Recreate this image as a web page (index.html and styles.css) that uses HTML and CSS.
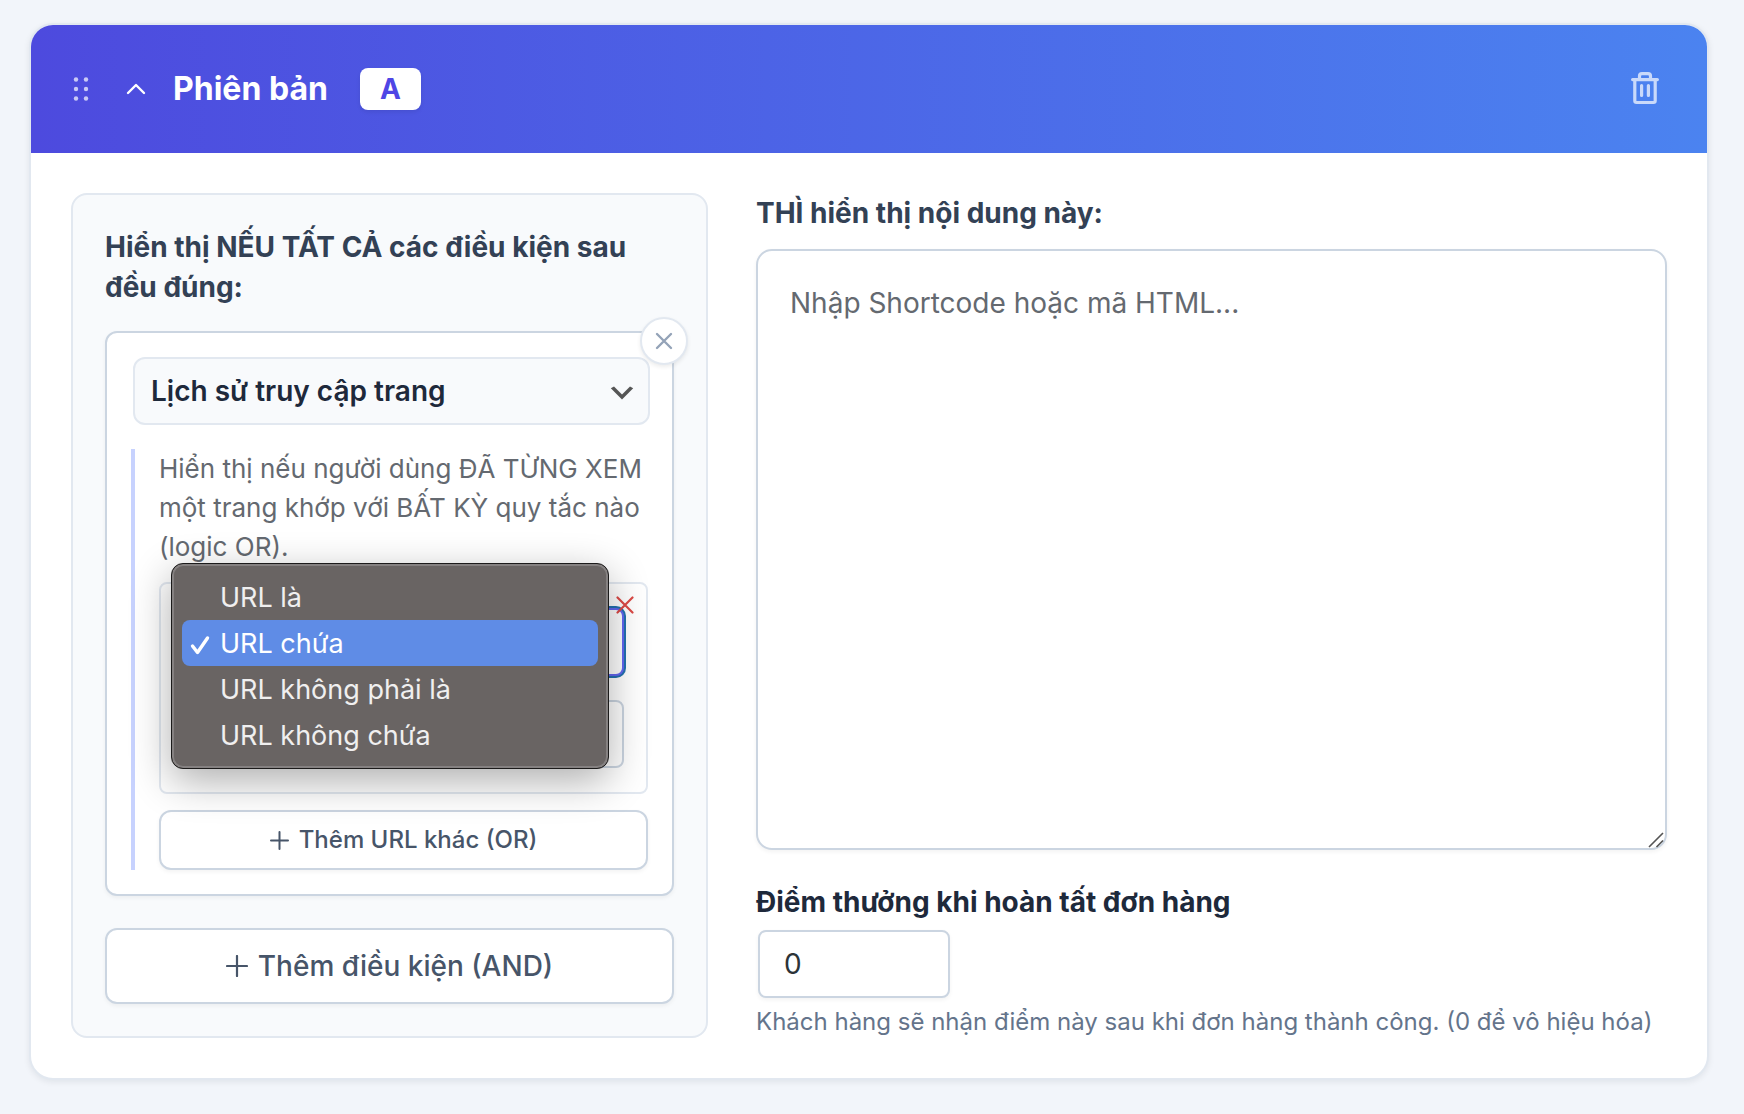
FILE: index.html
```html
<!DOCTYPE html>
<html lang="vi">
    <head>
        <meta charset="utf-8">
        <meta name="viewport" content="width=device-width, initial-scale=1">
        <title>Phiên bản A</title>
        <link rel="stylesheet" href="styles.css">
    </head>
    <body>
        <section class="variant">
            <header class="variant-header">
                <button type="button" class="icon-button drag" aria-label="Kéo để sắp xếp">
                    <svg width="16" height="24" viewBox="0 0 16 24" fill="currentColor">
                        <circle cx="3" cy="2.5" r="2.2"/><circle cx="13" cy="2.5" r="2.2"/>
                        <circle cx="3" cy="12" r="2.2"/><circle cx="13" cy="12" r="2.2"/>
                        <circle cx="3" cy="21.5" r="2.2"/><circle cx="13" cy="21.5" r="2.2"/>
                    </svg>
                </button>
                <button type="button" class="icon-button toggle" aria-label="Thu gọn">
                    <svg width="20" height="12" viewBox="0 0 20 12" fill="none" stroke="currentColor" stroke-width="2.4" stroke-linecap="round" stroke-linejoin="round">
                        <path d="M2 10l8-8 8 8"/>
                    </svg>
                </button>
                <h2 class="variant-title">Phiên bản</h2>
                <span class="variant-badge">A</span>
                <button type="button" class="icon-button trash" aria-label="Xóa phiên bản">
                    <svg width="28" height="34" viewBox="0 0 28 34" fill="none" stroke="currentColor" stroke-width="3.2" stroke-linecap="round" stroke-linejoin="round">
                        <path d="M1.6 7.6h24.8M3.8 7.6v21.2q0 1.7 1.7 1.7h17q1.7 0 1.7-1.7V7.6M8.5 7V4q0-2.4 2.5-2.4h6q2.5 0 2.5 2.4v3M10.6 13.5v10M17.4 13.5v10"/>
                    </svg>
                </button>
            </header>

            <div class="variant-body">
                <div class="rules">
                    <h3 class="heading rules-heading">Hiển thị NẾU TẤT CẢ các điều kiện sau đều đúng:</h3>

                    <div class="condition">
                        <button type="button" class="condition-remove" aria-label="Xóa điều kiện">
                            <svg width="18" height="18" viewBox="0 0 18 18" stroke="currentColor" stroke-width="2.4" stroke-linecap="round">
                                <path d="M2 2l14 14M16 2L2 16"/>
                            </svg>
                        </button>
                        <div class="select-wrap condition-type">
                            <select class="field field-type" aria-label="Loại điều kiện">
                                <option>Lịch sử truy cập trang</option>
                            </select>
                            <svg class="chevron" width="32" height="32" viewBox="0 0 20 20" fill="#555"><path d="M5 6l5 5 5-5 2 1-7 7-7-7 2-1z"/></svg>
                        </div>

                        <div class="history">
                            <p class="history-text">Hiển thị nếu người dùng ĐÃ TỪNG XEM một trang khớp với BẤT KỲ quy tắc nào (logic OR).</p>
                            <div class="url-rule">
                                <div class="select-wrap">
                                    <select class="field field-focus" aria-label="Kiểu so khớp URL">
                                        <option>URL là</option>
                                        <option selected>URL chứa</option>
                                        <option>URL không phải là</option>
                                        <option>URL không chứa</option>
                                    </select>
                                    <ul class="menu" role="listbox" aria-label="Kiểu so khớp URL">
                                        <li class="menu-item" role="option">URL là</li>
                                        <li class="menu-item selected" role="option" aria-selected="true">
                                            <svg class="check" width="20" height="20" viewBox="0 0 20 20" fill="none" stroke="currentColor" stroke-width="3.4" stroke-linecap="round" stroke-linejoin="round"><path d="M2.5 11l5 6.5L17.5 3"/></svg>
                                            URL chứa
                                        </li>
                                        <li class="menu-item" role="option">URL không phải là</li>
                                        <li class="menu-item" role="option">URL không chứa</li>
                                    </ul>
                                </div>
                                <input type="text" class="field" aria-label="URL">
                                <button type="button" class="url-remove" aria-label="Xóa URL">
                                    <svg width="18" height="18" viewBox="0 0 18 18" stroke="currentColor" stroke-width="2.2" stroke-linecap="round">
                                        <path d="M1.5 1.5l15 15M16.5 1.5l-15 15"/>
                                    </svg>
                                </button>
                            </div>
                            <button type="button" class="add-button add-or">
                                <svg width="19" height="19" viewBox="0 0 19 19" stroke="currentColor" stroke-width="2" stroke-linecap="round"><path d="M9.5 1v17M1 9.5h17"/></svg>
                                Thêm URL khác (OR)
                            </button>
                        </div>
                    </div>

                    <button type="button" class="add-button add-and">
                        <svg width="22" height="22" viewBox="0 0 22 22" stroke="currentColor" stroke-width="2.2" stroke-linecap="round"><path d="M11 1v20M1 11h20"/></svg>
                        Thêm điều kiện (AND)
                    </button>
                </div>

                <div class="content">
                    <label class="heading" for="content">THÌ hiển thị nội dung này:</label>
                    <div class="editor">
                        <textarea class="editor-input" id="content" placeholder="Nhập Shortcode hoặc mã HTML..."></textarea>
                        <svg class="grip" width="16" height="16" viewBox="0 0 16 16" stroke="#555" stroke-width="1.6"><path d="M1 15L15 1M8.5 15L15 8.5"/></svg>
                    </div>
                    <label class="points-label" for="points">Điểm thưởng khi hoàn tất đơn hàng</label>
                    <input type="number" class="field points" id="points" value="0">
                    <p class="hint">Khách hàng sẽ nhận điểm này sau khi đơn hàng thành công. (0 để vô hiệu hóa)</p>
                </div>
            </div>
        </section>
    </body>
</html>
```

FILE: styles.css
```css
* {
    box-sizing: border-box;
}
body {
    margin: 0;
    padding: 23px 35px 34px 29px;
    background-color: #f2f5fa;
    font-family: Inter, "Noto Sans", sans-serif;
    font-size: 28px;
    line-height: 40px;
    color: #1e293b;
}
h2, h3, p, ul {
    margin: 0;
    padding: 0;
}
button, input, select, textarea {
    font: inherit;
    color: inherit;
}
button {
    cursor: pointer;
}
svg {
    display: block;
}

/* card */
.variant {
    border: 2px solid #e2e8f0;
    border-radius: 24px;
    background-color: white;
    box-shadow: 0 2px 6px rgba(15, 23, 42, 0.08);
}
.variant-header {
    display: flex;
    align-items: center;
    height: 128px;
    padding: 0 40px;
    border-radius: 22px 22px 0 0;
    background: linear-gradient(to right, #4d4ade, #4b83f0);
    color: white;
}
.icon-button {
    display: flex;
    padding: 0;
    border: none;
    background: none;
}
.drag {
    margin-left: 2px;
    color: rgba(255, 255, 255, 0.7);
}
.toggle {
    margin-left: 37px;
}
.trash {
    margin-left: auto;
    margin-right: 8px;
    color: rgba(255, 255, 255, 0.7);
}
.variant-title {
    margin-left: 27px;
    font-size: 32px;
    font-weight: 700;
}
.variant-badge {
    margin-left: 32px;
    padding: 1px 20px;
    border-radius: 8px;
    background-color: white;
    color: #4f46e5;
    font-weight: 700;
    box-shadow: 0 2px 4px rgba(0, 0, 0, 0.08);
}
.variant-body {
    display: grid;
    grid-template-columns: repeat(12, 1fr);
    column-gap: 48px;
    padding: 40px;
}

.heading {
    font-size: 28px;
    font-weight: 700;
    color: #334155;
}

/* left column */
.rules {
    grid-column: span 5;
    padding: 32px;
    border: 2px solid #e2e8f0;
    border-radius: 16px;
    background-color: #f8fafc;
}
.rules-heading {
    margin-bottom: 24px;
}
.condition {
    position: relative;
    padding: 24px;
    margin-bottom: 32px;
    border: 2px solid #cbd5e1;
    border-radius: 12px;
    background-color: white;
    box-shadow: 0 2px 4px rgba(0, 0, 0, 0.05);
}
.condition-remove {
    position: absolute;
    z-index: 1;
    top: -16px;
    right: -16px;
    display: flex;
    align-items: center;
    justify-content: center;
    width: 48px;
    height: 48px;
    padding: 0;
    border: 2px solid #e2e8f0;
    border-radius: 50%;
    background-color: white;
    color: #94a3b8;
    box-shadow: 0 2px 4px rgba(0, 0, 0, 0.08);
}

.select-wrap {
    position: relative;
}
.field {
    display: block;
    width: 100%;
    height: 68px;
    padding: 0 16px;
    border: 2px solid #cbd5e1;
    border-radius: 8px;
    background-color: white;
    color: #2c3338;
    appearance: none;
}
.field-type {
    border-color: #e2e8f0;
    border-radius: 12px;
    background-color: #f8fafc;
    color: #1e293b;
    font-weight: 600;
}
.field-focus {
    border-color: #6366f1;
    box-shadow: 0 0 0 2px #2271b1;
}
.chevron {
    position: absolute;
    right: 12px;
    top: 20px;
}
.condition-type {
    margin: 0 -2px 24px 2px;
}

.history {
    padding-left: 24px;
    border-left: 4px solid #c7d2fe;
}
.history-text {
    font-size: 26px;
    line-height: 39px;
    color: #646970;
}
.url-rule {
    position: relative;
    display: grid;
    row-gap: 24px;
    margin: 16px 0;
    padding: 24px 22px 24px 26px;
    border: 2px solid #e2e8f0;
    border-radius: 8px;
    background-color: white;
}
.url-remove {
    position: absolute;
    z-index: 1;
    top: 12px;
    right: 12px;
    padding: 0;
    border: none;
    background: none;
    color: #dc4a46;
}

/* open dropdown */
.menu {
    position: absolute;
    z-index: 2;
    top: -45px;
    left: -16px;
    right: 15px;
    padding: 10px;
    border: 1px solid #1c1b1b;
    border-radius: 12px;
    background-color: #696463;
    box-shadow: inset 0 0 0 2px #858181, 0 12px 40px rgba(0, 0, 0, 0.32);
    list-style: none;
    font-size: 27px;
    color: #f0efef;
}
.menu-item {
    position: relative;
    padding: 4px 38px 2px;
    border-radius: 8px;
}
.menu-item.selected {
    background-color: #5f8ce6;
    color: white;
}
.check {
    position: absolute;
    left: 8px;
    top: 15px;
}

.add-button {
    display: flex;
    align-items: center;
    justify-content: center;
    gap: 10px;
    width: 100%;
    border: 2px solid #cbd5e1;
    border-radius: 12px;
    background-color: white;
    color: #475569;
    font-weight: 500;
    box-shadow: 0 2px 4px rgba(0, 0, 0, 0.05);
}
.add-or {
    height: 60px;
    font-size: 24px;
}
.add-and {
    height: 76px;
}

/* right column */
.content {
    grid-column: span 7;
    display: flex;
    flex-direction: column;
}
.editor {
    position: relative;
    flex: 1;
    display: flex;
    margin: 16px 0 32px;
}
.editor-input {
    width: 100%;
    padding: 32px;
    border: 2px solid #cbd5e1;
    border-radius: 16px;
    background-color: white;
    box-shadow: 0 2px 4px rgba(0, 0, 0, 0.05);
    resize: none;
}
.editor-input::placeholder {
    color: #646970;
}
.grip {
    position: absolute;
    right: 3px;
    bottom: 2px;
}
.points-label {
    font-weight: 700;
}
.points {
    width: 192px;
    margin: 8px 2px;
    padding: 0 24px;
    box-shadow: 0 2px 4px rgba(0, 0, 0, 0.05);
}
.hint {
    font-size: 24px;
    line-height: 32px;
    color: #64748b;
}
```
